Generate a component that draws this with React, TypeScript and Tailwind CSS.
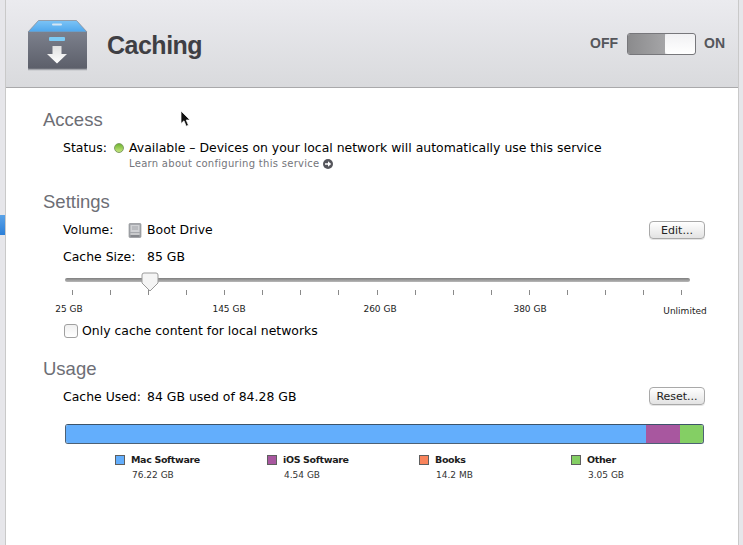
import { Fragment } from "react";

const sans = "font-['DejaVu_Sans',sans-serif]";
const ticks = Array.from({ length: 17 }, (_, i) => i);

const legend = [
  { name: "Mac Software", value: "76.22 GB", color: "bg-[#63aefc]" },
  { name: "iOS Software", value: "4.54 GB", color: "bg-[#a8579f]" },
  { name: "Books", value: "14.2 MB", color: "bg-[#f9845c]" },
  { name: "Other", value: "3.05 GB", color: "bg-[#84cf64]" },
];

function BoxIcon() {
  return (
    <svg width="62" height="52" viewBox="0 0 62 52" className="shrink-0">
      <defs>
        <linearGradient id="boxBody" x1="0" y1="0" x2="0" y2="1">
          <stop offset="0" stopColor="#7c808c" />
          <stop offset="1" stopColor="#5b5e69" />
        </linearGradient>
        <linearGradient id="boxTop" x1="0" y1="0" x2="0" y2="1">
          <stop offset="0" stopColor="#7cc4f6" />
          <stop offset="1" stopColor="#4ea6ec" />
        </linearGradient>
        <linearGradient id="boxArrow" x1="0" y1="0" x2="0" y2="1">
          <stop offset="0" stopColor="#e0e0e0" />
          <stop offset="1" stopColor="#ffffff" />
        </linearGradient>
      </defs>
      <path d="M1 12 L11.5 0.5 H49.5 L60 12 Z" fill="url(#boxTop)" stroke="#8b8f99" strokeWidth="0.8" />
      <rect x="25" y="3.5" width="10" height="2" rx="1" fill="#d5e6f3" />
      <path d="M1 12 H60 V48 Q60 49.5 58.5 49.5 H2.5 Q1 49.5 1 48 Z" fill="url(#boxBody)" />
      <path d="M1 49.5 H60" stroke="#a5a7ad" strokeWidth="1.5" />
      <rect x="22" y="17" width="16" height="4" rx="1" fill="#7ccbf5" />
      <path d="M25.5 26 H34.5 V34 H40 L30 43.5 L20 34 H25.5 Z" fill="url(#boxArrow)" />
    </svg>
  );
}

function DriveIcon() {
  return (
    <svg width="14" height="15" viewBox="0 0 14 15">
      <rect x="1" y="0.5" width="12" height="14" rx="1" fill="#a6a8ad" stroke="#85878c" strokeWidth="0.6" />
      <rect x="2.5" y="2" width="9" height="7" fill="#d0d1d4" />
      <path d="M4 4 H10 M4 6 H10" stroke="#97999e" strokeWidth="0.8" />
      <rect x="2.5" y="10.5" width="9" height="1" fill="#ececec" />
      <rect x="2.5" y="12.5" width="9" height="1" fill="#66686e" />
    </svg>
  );
}

function Heading({ children }: { children: string }) {
  return <h2 className="font-['Liberation_Sans',sans-serif] text-[18.5px] leading-[22px] text-[#6d6e75]">{children}</h2>;
}

function MacButton({ children }: { children: string }) {
  return (
    <button className="h-[18px] w-[56px] rounded-[4px] border border-[#a9a9a9] bg-gradient-to-b from-white to-[#e3e3e3] text-[11px] leading-[15px] text-[#222] shadow-[0_1px_0_#e5e5e5]">
      {children}
    </button>
  );
}

export default function App() {
  return (
    <div className={`relative flex h-[545px] w-[743px] overflow-hidden bg-white text-black ${sans}`}>
      <div className="flex w-[5px] shrink-0 flex-col bg-[#e6e6ea] pt-[215px]">
        <div className="h-[20px] bg-gradient-to-b from-[#5aa3e8] to-[#2b7fd8]" />
      </div>
      <div className="w-px shrink-0 bg-[#c9c9c9]" />

      <div className="min-w-0 flex-1">
        <header className="flex h-[88px] items-center border-b border-[#a9a9ab] bg-gradient-to-b from-[#ebebef] to-[#d9dadd] pt-[5px] pl-[21px] pr-[13px]">
          <BoxIcon />
          <h1 className="ml-[18px] flex-1 font-['Liberation_Sans',sans-serif] text-[25px] font-bold tracking-[-0.5px] text-[#3f3f44]">Caching</h1>
          <div className="mb-[5px] flex items-center font-['Liberation_Sans',sans-serif] text-[14px] font-bold text-[#55565b]">
            <span>OFF</span>
            <div className="ml-[9px] mr-[8px] flex h-[22px] w-[69px] overflow-hidden rounded-[3px] border border-[#77777b]">
              <div className="flex-1 bg-gradient-to-r from-[#8b8b8d] to-[#a5a5a7]" />
              <div className="w-[30px] rounded-[3px] bg-gradient-to-b from-[#f1f1f3] to-white" />
            </div>
            <span>ON</span>
          </div>
        </header>

        <main className="pl-[37px] pr-[33px]">
          <section className="pt-[21px]">
            <Heading>Access</Heading>
            <div className="mt-[8px] flex h-[18px] items-center pl-[20px] text-[12.45px]">
              <span className="w-[51px]">Status:</span>
              <span className="h-[10px] w-[10px] rounded-full border border-[#7f9d63] bg-gradient-to-b from-[#6fb52f] to-[#c4e67c]" />
              <span className="ml-[5px] whitespace-nowrap">Available – Devices on your local network will automatically use this service</span>
            </div>
            <div className="flex h-[13px] items-center pl-[86px] text-[10px] tracking-[0.29px] text-[#74757b]">
              Learn about configuring this service
              <svg width="10" height="10" viewBox="0 0 10 10" className="ml-[3px]">
                <circle cx="5" cy="5" r="5" fill="#55565c" />
                <path d="M2 4.2 H5 V2.2 L8.2 5 L5 7.8 V5.8 H2 Z" fill="#fff" />
              </svg>
            </div>
          </section>

          <section className="pt-[21px]">
            <Heading>Settings</Heading>
            <div className="mt-[5px] flex h-[24px] items-center pl-[20px] text-[12.45px]">
              <span className="w-[65px]">Volume:</span>
              <DriveIcon />
              <span className="ml-[5px] flex-1">Boot Drive</span>
              <MacButton>Edit...</MacButton>
            </div>
            <div className="mt-[6px] flex h-[18px] items-center pl-[20px] text-[12.45px]">
              <span className="w-[84px]">Cache Size:</span>
              <span>85 GB</span>
            </div>

            <div className="relative mt-[12px] ml-[22px] mr-[15px] h-[4px] rounded-full bg-gradient-to-b from-[#7f7f7f] to-[#b8b8b8]">
              <svg width="18" height="20" viewBox="0 0 18 20" className="absolute left-[76px] top-[-6px]">
                <path d="M1 3 Q1 1 3 1 H15 Q17 1 17 3 V11 L9 19 L1 11 Z" fill="#f5f5f5" stroke="#9b9b9b" />
              </svg>
            </div>
            <div className="mt-[8px] ml-[29px] mr-[23px] flex h-[5px] justify-between">
              {ticks.map((t) => (
                <Fragment key={t}>
                  <span className="h-[5px] w-px bg-[#8a8a8a]" />
                </Fragment>
              ))}
            </div>
            <div className="-ml-[4px] mt-[8px] flex text-[9px] leading-[12px] text-[#222]">
              <span className="mr-[100px] w-[60px] shrink-0 whitespace-nowrap text-center">25 GB</span>
              <span className="mr-[91px] w-[60px] shrink-0 whitespace-nowrap text-center">145 GB</span>
              <span className="mr-[90px] w-[60px] shrink-0 whitespace-nowrap text-center">260 GB</span>
              <span className="mr-[95px] w-[60px] shrink-0 whitespace-nowrap text-center">380 GB</span>
              <span className="mt-[2px] w-[60px] shrink-0 whitespace-nowrap text-center">Unlimited</span>
            </div>
            <label className="mt-[5px] flex h-[18px] items-center pl-[21px] text-[12.45px]">
              <span className="h-[14px] w-[14px] rounded-[3px] border border-[#a0a0a0] bg-gradient-to-b from-[#f0f0f0] to-white" />
              <span className="ml-[4px]">Only cache content for local networks</span>
            </label>
          </section>

          <section className="pt-[18px]">
            <Heading>Usage</Heading>
            <div className="mt-[6px] flex h-[22px] items-center pl-[20px] text-[12.45px]">
              <span className="w-[84px]">Cache Used:</span>
              <span className="flex-1">84 GB used of 84.28 GB</span>
              <div className="pb-[2px]">
                <MacButton>Reset...</MacButton>
              </div>
            </div>
            <div className="mt-[16px] ml-[22px] mr-[1px] flex h-[20px] overflow-hidden rounded-[3px] border border-[#4d6175] border-t-[#3c5369]">
              <div className="w-[580px] bg-[#63aefc]" />
              <div className="w-[34px] bg-[#a8579f]" />
              <div className="flex-1 bg-[#84cf64]" />
            </div>
            <div className="mt-[9px] ml-[72px] flex">
              {legend.map((item) => (
                <div key={item.name} className="w-[152px] shrink-0">
                  <div className="flex h-[14px] items-center text-[9.5px] font-bold tracking-[-0.35px] text-[#1c1c1c]">
                    <span className={`h-[10px] w-[10px] border border-[#5f5f5f] ${item.color}`} />
                    <span className="ml-[6px]">{item.name}</span>
                  </div>
                  <div className="pl-[17px] pt-[1px] text-[9px] leading-[14px] text-[#333]">{item.value}</div>
                </div>
              ))}
            </div>
          </section>
        </main>
      </div>

      <div className="w-px shrink-0 bg-[#c9c9c9]" />
      <div className="w-[4px] shrink-0 bg-[#e6e6ea]" />

      {/* mouse pointer caught in the screenshot */}
      <svg width="12" height="18" viewBox="0 0 12 18" className="absolute left-[180px] top-[110px]">
        <path d="M1 1 V13.5 L4 10.8 L6.2 16.2 L8.4 15.2 L6.2 10 H10 Z" fill="#111" stroke="#fff" strokeWidth="0.7" />
      </svg>
    </div>
  );
}
